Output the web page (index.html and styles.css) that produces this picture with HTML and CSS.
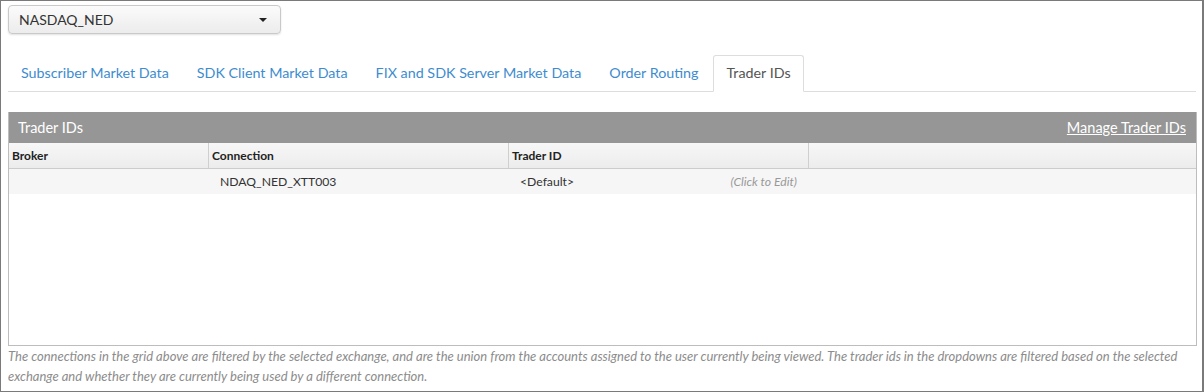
FILE: index.html
```html
<!DOCTYPE html>
<html>
<head>
    <meta charset="utf-8">
    <title>Trader IDs</title>
    <link rel="stylesheet" href="styles.css">
</head>
<body>
    <div class="frame">
        <div class="exchange">
            <span>NASDAQ_NED</span>
            <span class="caret"></span>
        </div>

        <ul class="tabs">
            <li>Subscriber Market Data</li>
            <li>SDK Client Market Data</li>
            <li>FIX and SDK Server Market Data</li>
            <li>Order Routing</li>
            <li class="active">Trader IDs</li>
        </ul>

        <div class="panel">
            <div class="panel-head">
                <span>Trader IDs</span>
                <a href="#">Manage Trader IDs</a>
            </div>
            <div class="grid">
                <div class="grid-row grid-header">
                    <div class="cell">Broker</div>
                    <div class="cell">Connection</div>
                    <div class="cell">Trader ID</div>
                    <div class="cell last"></div>
                </div>
                <div class="grid-row grid-data">
                    <div class="cell"></div>
                    <div class="cell">NDAQ_NED_XTT003</div>
                    <div class="cell edit">
                        <span>&lt;Default&gt;</span>
                        <em>(Click to Edit)</em>
                    </div>
                    <div class="cell last"></div>
                </div>
            </div>
        </div>

        <p class="note">The connections in the grid above are filtered by the selected exchange, and are the union from the accounts assigned to the user currently being viewed. The trader ids in the dropdowns are filtered based on the selected exchange and whether they are currently being used by a different connection.</p>
    </div>
</body>
</html>
```

FILE: styles.css
```css
html, body {
    margin: 0;
    padding: 0;
    background: #ffffff;
    font-family: Lato, "Open Sans", sans-serif;
    color: #333333;
}

.frame {
    box-sizing: border-box;
    width: 1204px;
    height: 392px;
    border: 1px solid #7a7a7a;
    border-right-width: 2px;
    padding: 4px 6px 0 7px;
}

.exchange {
    box-sizing: border-box;
    width: 273px;
    height: 29px;
    display: flex;
    align-items: center;
    justify-content: space-between;
    padding: 0 10px 0 10px;
    border: 1px solid #c9c9c9;
    border-radius: 4px;
    background: linear-gradient(#fbfbfb, #ececec);
    box-shadow: 0 1px 2px rgba(0, 0, 0, 0.12);
    font-size: 14px;
    color: #333333;
}

.caret {
    width: 0;
    height: 0;
    margin-right: 3px;
    border-left: 4px solid transparent;
    border-right: 4px solid transparent;
    border-top: 4px solid #222222;
}

.tabs {
    list-style: none;
    margin: 21px 0 0 0;
    padding: 0;
    display: flex;
    border-bottom: 1px solid #dddddd;
    height: 36px;
}

.tabs li {
    box-sizing: border-box;
    height: 37px;
    padding: 0 12px 3px 12px;
    margin-right: 2px;
    display: flex;
    align-items: center;
    font-size: 14.3px;
    color: #3d8ccf;
    border: 1px solid transparent;
    border-radius: 3px 3px 0 0;
}

.tabs li.active {
    color: #555555;
    background: #ffffff;
    border-color: #dddddd #dddddd #ffffff;
}

.panel {
    box-sizing: border-box;
    margin-top: 20px;
    width: 1189px;
    height: 234px;
    border: 1px solid #bdbdbd;
    border-top: 0;
}

.panel-head {
    height: 31px;
    background: #969696;
    display: flex;
    align-items: center;
    justify-content: space-between;
    padding: 0 10px 0 9px;
    font-size: 14.5px;
    color: #ffffff;
}

.panel-head a {
    color: #ffffff;
    text-decoration: underline;
}

.grid-row {
    display: flex;
    height: 25px;
}

.grid-header {
    background: linear-gradient(#f7f7f7, #ececec);
    border-bottom: 1px solid #cccccc;
    font-size: 12px;
    font-weight: bold;
    color: #222222;
}

.grid-header .cell {
    border-right: 1px solid #cfcfcf;
    padding-left: 3px;
}

.grid-data {
    background: #f6f6f6;
    font-size: 12.2px;
    color: #333333;
}

.cell {
    box-sizing: border-box;
    width: 300px;
    display: flex;
    align-items: center;
    padding-left: 11px;
    padding-bottom: 1px;
}

.cell:first-child {
    width: 200px;
}

.cell.last {
    flex: 1;
    border-right: 0;
}

.edit {
    justify-content: space-between;
    padding-right: 12px;
}

.edit em {
    color: #999999;
}

.note {
    margin: 0;
    font-size: 13px;
    font-style: italic;
    line-height: 20px;
    color: #8c8c8c;
}
```
